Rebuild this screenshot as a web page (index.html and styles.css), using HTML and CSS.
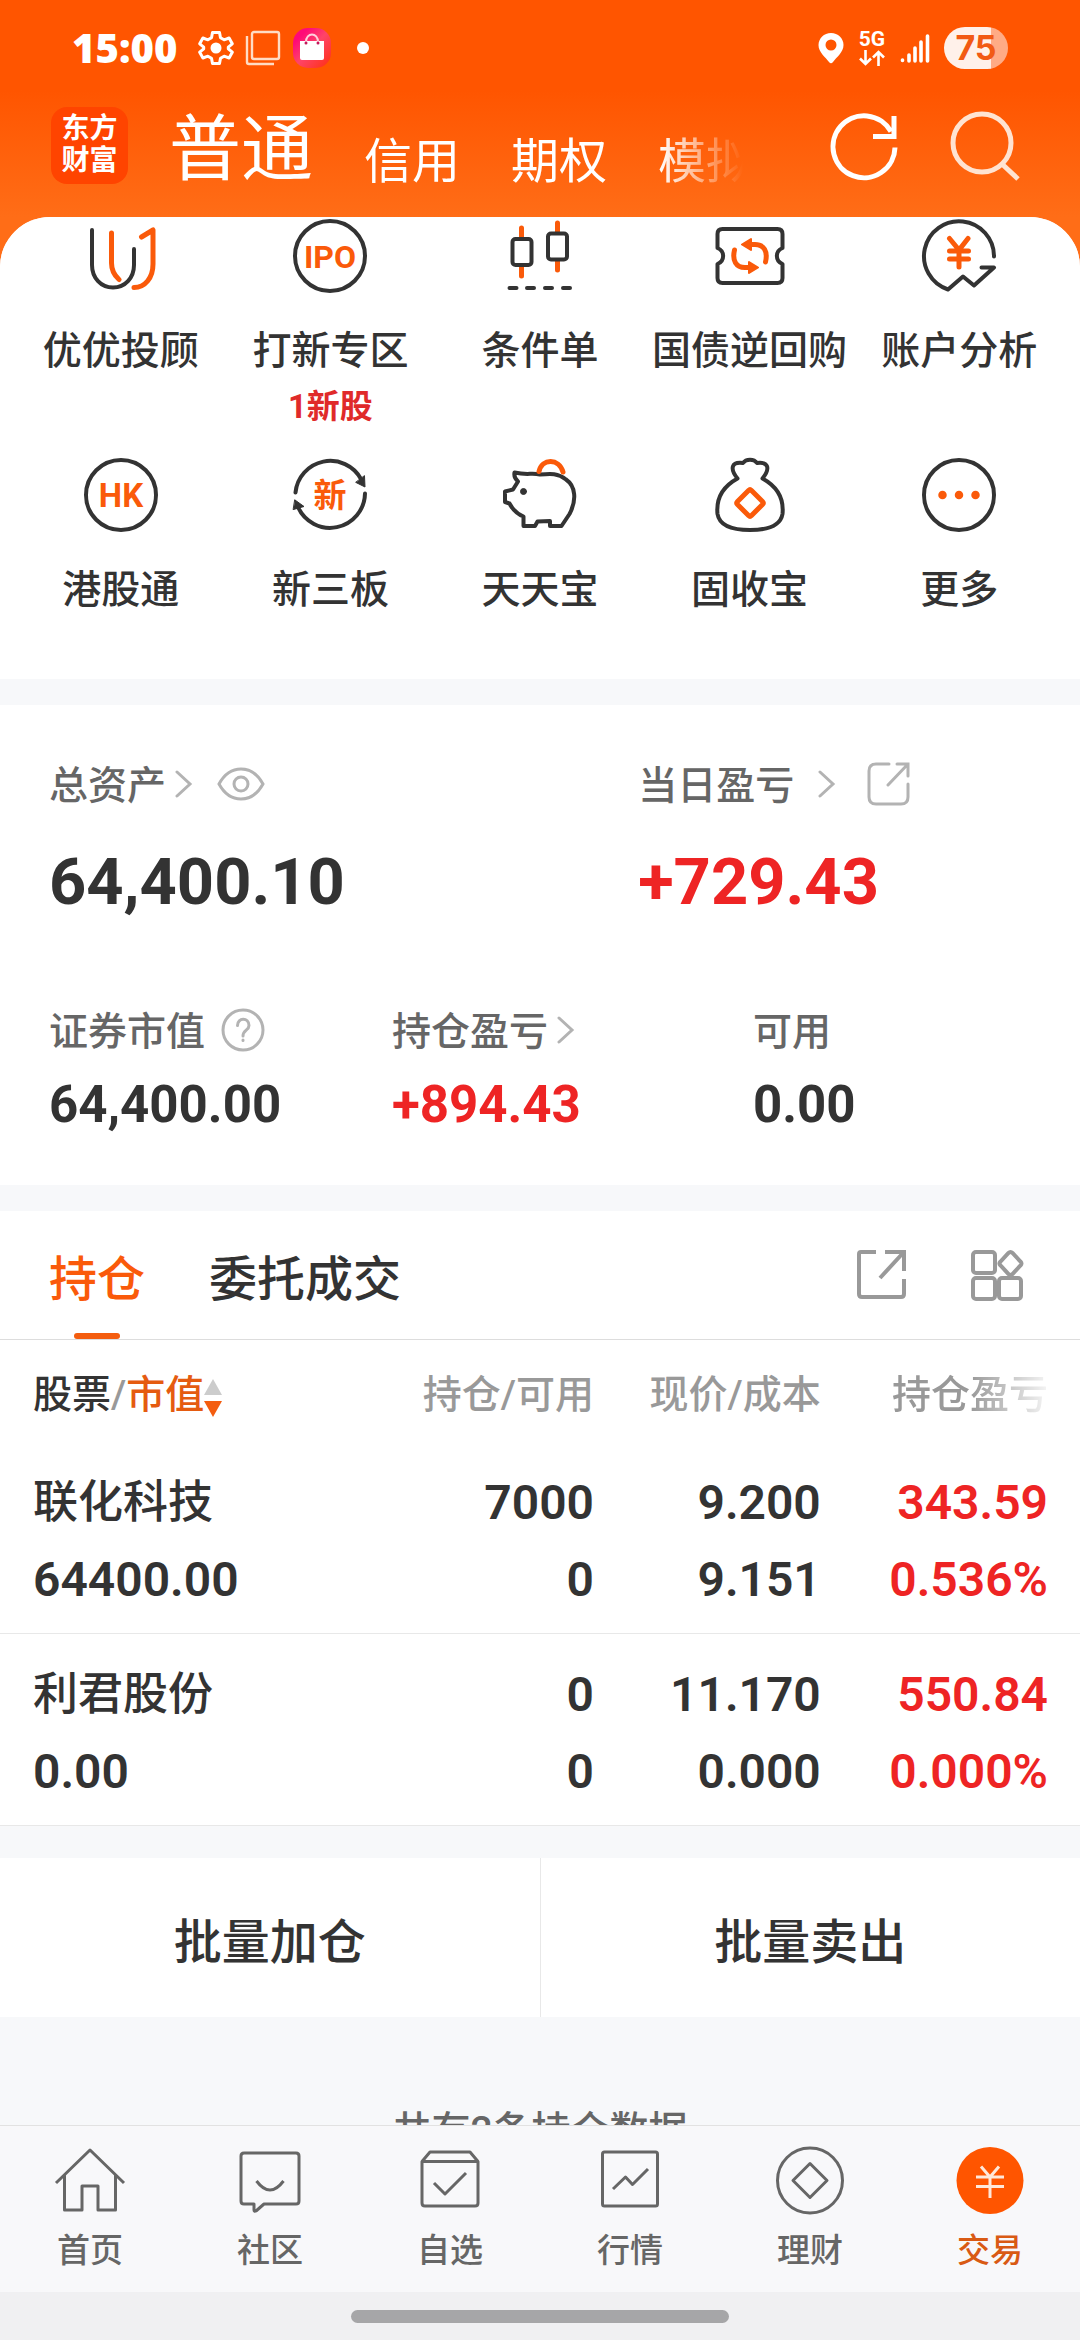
FILE: index.html
```html
<!DOCTYPE html>
<html lang="zh-CN">
<head>
    <meta charset="UTF-8">
    <meta name="viewport" content="width=device-width, initial-scale=1.0">
    <title>东方财富 - 交易</title>
    <link rel="stylesheet" href="styles.css">
</head>
<body>
<div class="app">
    <!-- Status bar -->
    <div class="status">
        <span class="clock">15:00</span>
        <svg class="st-gear" width="36" height="36" viewBox="0 0 36 36" fill="none" stroke="#fff" stroke-width="3" stroke-linejoin="round">
            <path d="M14.5 2.5h7l1 5.2 3.6 2.1 5-1.8 3.2 5.8-4 3.4v1.6l4 3.4-3.2 5.8-5-1.8-3.6 2.1-1 5.2h-7l-1-5.2-3.6-2.1-5 1.8-3.2-5.8 4-3.4v-1.6l-4-3.4 3.2-5.8 5 1.8 3.6-2.1z"/>
            <circle cx="18" cy="18" r="5.5" fill="#fff" stroke="none"/>
        </svg>
        <svg width="36" height="36" viewBox="0 0 36 36" fill="none" stroke="#ffdcc4" stroke-width="2.4">
            <rect x="7" y="2" width="27" height="27" rx="2"/>
            <path d="M2 6v26q0 2 2 2h25"/>
        </svg>
        <svg width="40" height="40" viewBox="0 0 40 40">
            <defs>
                <linearGradient id="bag" x1="0" y1="0" x2="1" y2="1">
                    <stop offset="0.2" stop-color="#ff0a78"/>
                    <stop offset="0.5" stop-color="#ff4468"/>
                    <stop offset="0.9" stop-color="#ff3320"/>
                </linearGradient>
            </defs>
            <rect x="1" y="0" width="38" height="40" rx="15" fill="url(#bag)"/>
            <path d="M8 13h24v17q0 2-2 2H10q-2 0-2-2z" fill="#fff"/>
            <path d="M14 14c0-10 12-10 12 0" fill="none" stroke="#ffd0dc" stroke-width="2"/>
            <circle cx="14" cy="15" r="1.5" fill="#c2185b"/><circle cx="26" cy="15" r="1.5" fill="#c2185b"/>
        </svg>
        <span class="dot"></span>
        <span class="spacer"></span>
        <svg width="26" height="32" viewBox="0 0 26 32"><path fill="#fff" fill-rule="evenodd" d="M13 1C6 1 .5 6.500.5 13c0 7.500 7 12 10.500 17q2 2.500 4 0c3.500-5 10.500-9.500 10.500-17C25.500 6.500 20 1 13 1zm0 6.500a5.500 5.500 0 1 1 0 11 5.500 5.500 0 0 1 0-11z"/></svg>
        <span class="net">
            <b>5G</b>
            <svg width="26" height="16" viewBox="0 0 26 16" fill="none" stroke="#fff" stroke-width="2.6"><path d="M6.500 0v14M1 8.500l5.500 5.500L12 8.500M19.500 16V2M14 7.500L19.500 2 25 7.500"/></svg>
        </span>
        <svg width="30" height="32" viewBox="0 0 30 32" stroke="#fff" stroke-width="3.6" stroke-linecap="round"><path d="M2.500 28v.5M9 23v6M15 16v13M21 10v19M27.500 4v25"/></svg>
        <span class="battery">75</span>
    </div>

    <!-- Title bar -->
    <header class="topbar">
        <a href="#" class="logo">东方<br>财富</a>
        <nav class="accounts">
            <a href="#" class="current">普通</a>
            <a href="#">信用</a>
            <a href="#">期权</a>
            <a href="#">模拟</a>
        </nav>
        <button class="icon-btn" aria-label="刷新">
            <svg width="72" height="72" viewBox="0 0 72 72" fill="none" stroke="#fff" stroke-width="5"><path d="M66 37.500A31 31 0 1 1 62 21.500M65 6v20.500H44"/></svg>
        </button>
        <button class="icon-btn" aria-label="搜索">
            <svg width="72" height="72" viewBox="0 0 72 72" fill="none" stroke="#ffe3d1" stroke-width="5"><circle cx="33" cy="33" r="29"/><path d="M53 54l16 15"/></svg>
        </button>
    </header>

    <main class="content">
        <!-- Shortcuts -->
        <section class="shortcuts">
            <a href="#">
                <svg class="ico" viewBox="0 0 76 76"><path d="M9 12V47c0 13 9 22.500 21 22.500S51 60 51 47V31"/><path class="o" d="M28.500 15V45c0 8 3 12.500 7.500 16.500M58.500 19L70 12V46c0 14-8 23.500-19 23.500"/></svg>
                <span>优优投顾</span>
            </a>
            <a href="#">
                <svg class="ico" viewBox="0 0 76 76"><circle cx="38" cy="38" r="35"/><text x="38" y="50" font-size="32">IPO</text></svg>
                <span>打新专区</span>
                <em>1新股</em>
            </a>
            <a href="#">
                <svg class="ico" viewBox="0 0 76 76"><path class="o" d="M19.500 10v9M19.500 49v9M55.500 5v9M55.500 43v9"/><rect x="10.500" y="21" width="19" height="26" rx="3"/><rect x="46" y="15.500" width="19" height="26" rx="3"/><path d="M7.500 70h7M25 70h7M43 70h7M61 70h7"/></svg>
                <span>条件单</span>
            </a>
            <a href="#">
                <svg class="ico" viewBox="0 0 76 76"><path d="M10.500 11h55q5 0 5 5v14c-7.500 3-7.500 13 0 16v14q0 5-5 5h-55q-5 0-5-5V46c7.500-3 7.500-13 0-16V16q0-5 5-5z"/><g class="o"><path d="M38 26.500h5c9 0 13 7 10.500 17.500M38 49.500h-5c-9 0-13-7-10.500-17.500"/><path class="fill" d="M30 26.500l9-5.500v11zM46 49.500L37 44v11z"/></g></svg>
                <span>国债逆回购</span>
            </a>
            <a href="#">
                <svg class="ico" viewBox="0 0 76 76"><path d="M73 38.500A35 35 0 1 0 27 71.500L42 58.500 53 67.500 73 49.500H60.500"/><path class="o" d="M28.500 20.500L38 32l9-11.500M38 32v17M28.500 33H47.500M28.500 41H47.500"/></svg>
                <span>账户分析</span>
            </a>
            <a href="#">
                <svg class="ico" viewBox="0 0 76 76"><circle cx="38" cy="38" r="35"/><text x="38" y="50" font-size="33">HK</text></svg>
                <span>港股通</span>
            </a>
            <a href="#">
                <svg class="ico" viewBox="0 0 76 76"><path d="M3.500 35.500A35 35 0 0 1 69 22M73 36.500A35 35 0 0 1 6 50"/><path class="dark" d="M72.500 19l.5 11-9-4.500zM3 43l9 6.500-10.500 3z"/><text x="38" y="50" font-size="33">新</text></svg>
                <span>新三板</span>
            </a>
            <a href="#">
                <svg class="ico" viewBox="0 0 76 76"><path d="M38 17.500C29 15.500 26 18.500 12.500 15.500q-1 5 3.500 9L11 32.500 3 34.500V45l4.500 1.500q5 9.500 14 13v9.500H33l2.500-4.500 12.500-.5V69H59.500l8-12C75 43 73.500 29 64 22.500 56 16 49 16.500 38 17.500z"/><path class="o" d="M37 14.500C40 1 57 1 61 15"/><circle class="dark" cx="21.500" cy="34.500" r="3"/></svg>
                <span>天天宝</span>
            </a>
            <a href="#">
                <svg class="ico" viewBox="0 0 76 76"><path d="M25.500 21.500C10 30 4 42 5.500 57 7.500 69 20 73 38 73s30.500-4 32.500-16C72 42 66 30 50.500 21.500c8-10 6-17-5.500-15.500-3-4.500-11-4.500-14 0-11.500-1.500-13.500 5.500-5.500 15.500"/><path class="o" d="M36.500 33.500q1.500-1.500 3 0l11 11q1.500 1.500 0 3l-11 11q-1.500 1.500-3 0l-11-11q-1.500-1.500 0-3z"/></svg>
                <span>固收宝</span>
            </a>
            <a href="#">
                <svg class="ico" viewBox="0 0 76 76"><circle cx="38" cy="38" r="35"/><g class="o"><path d="M21.500 38h0M38 38h0M54.500 38h0" stroke-width="8.500"/></g></svg>
                <span>更多</span>
            </a>
        </section>

        <!-- Assets -->
        <section class="assets">
            <div class="assets-main">
                <div>
                    <h2><a href="#">总资产</a>
                        <svg class="chev" viewBox="0 0 18 30"><path d="M2 3l13 12L2 27"/></svg>
                        <button class="eye" aria-label="隐藏金额"><svg width="48" height="36" viewBox="0 0 48 36"><path d="M2 18C13-2 35-2 46 18 35 38 13 38 2 18z"/><circle cx="24" cy="18" r="7"/></svg></button>
                    </h2>
                    <strong>64,400.10</strong>
                </div>
                <div>
                    <h2 class="daily"><a href="#">当日盈亏</a>
                        <svg class="chev" viewBox="0 0 18 30"><path d="M2 3l13 12L2 27"/></svg>
                        <button aria-label="分享"><svg width="44" height="44" viewBox="0 0 44 44"><path d="M22 2H9Q2 2 2 9V35q0 7 7 7H34q7 0 7-7V22M30 2H41V14M41 2L21 23"/></svg></button>
                    </h2>
                    <strong class="up">+729.43</strong>
                </div>
            </div>
            <div class="assets-sub">
                <div>
                    <h3>证券市值
                        <button class="help" aria-label="说明"><svg width="44" height="44" viewBox="0 0 44 44"><circle cx="22" cy="22" r="20"/><path d="M16.500 17.500c0-8.500 11.500-8 11.500 0 0 5-6 4.500-6 10.500M22 32v.5"/></svg></button>
                    </h3>
                    <strong>64,400.00</strong>
                </div>
                <div>
                    <h3><a href="#">持仓盈亏</a>
                        <svg class="chev" viewBox="0 0 18 30"><path d="M2 3l13 12L2 27"/></svg>
                    </h3>
                    <strong class="up">+894.43</strong>
                </div>
                <div>
                    <h3>可用</h3>
                    <strong>0.00</strong>
                </div>
            </div>
        </section>

        <!-- Positions -->
        <section class="positions">
            <div class="tabs">
                <button class="tab active">持仓</button>
                <button class="tab">委托成交</button>
                <span class="spacer"></span>
                <button class="tool" aria-label="分享"><svg width="54" height="54" viewBox="0 0 54 54"><path d="M23 4H8Q6 4 6 6V46q0 3 3 3H48q3 0 3-3V31M32 4H51V23M50 5L27 30"/></svg></button>
                <button class="tool" aria-label="布局"><svg width="54" height="54" viewBox="0 0 54 54"><rect x="2" y="4" width="22" height="21" rx="3"/><rect x="2" y="30" width="22" height="21" rx="3"/><rect x="28" y="30" width="22" height="21" rx="3"/><path d="M37.500 5q2-2 4 0l8 8.500q2 2 0 4l-8 8.500q-2 2-4 0l-8-8.500q-2-2 0-4z"/></svg></button>
            </div>
            <table>
                <thead>
                    <tr>
                        <th><b>股票</b>/<i>市值</i><svg class="sort" width="18" height="38" viewBox="0 0 18 38"><path fill="#ccc" d="M9 0l9 16H0z"/><path fill="#f45d0f" d="M9 38l9-16H0z"/></svg></th>
                        <th>持仓/可用</th>
                        <th>现价/成本</th>
                        <th><span class="fade">持仓盈亏</span></th>
                    </tr>
                </thead>
                <tbody>
                    <tr>
                        <td><span class="name">联化科技</span><span>64400.00</span></td>
                        <td><span>7000</span><span>0</span></td>
                        <td><span>9.200</span><span>9.151</span></td>
                        <td class="up"><span>343.59</span><span>0.536%</span></td>
                    </tr>
                    <tr>
                        <td><span class="name">利君股份</span><span>0.00</span></td>
                        <td><span>0</span><span>0</span></td>
                        <td><span>11.170</span><span>0.000</span></td>
                        <td class="up"><span>550.84</span><span>0.000%</span></td>
                    </tr>
                </tbody>
            </table>
        </section>

        <div class="batch">
            <button>批量加仓</button>
            <button>批量卖出</button>
        </div>
        <p class="total">共有2条持仓数据</p>
    </main>

    <!-- Bottom nav -->
    <nav class="bottom">
        <a href="#"><svg viewBox="0 0 72 72"><path d="M2 38L36 5l34 33M10.500 30V65H28V41H44V65H61.500V30"/></svg>首页</a>
        <a href="#"><svg viewBox="0 0 72 72"><path d="M10 8H62q3 0 3 3V56q0 3-3 3H30l-8 7q-2 1-2-1V59H10q-3 0-3-3V11q0-3 3-3zM22.500 36q13.500 18 27 0"/></svg>社区</a>
        <a href="#"><svg viewBox="0 0 72 72"><path d="M8 16.500H64V58q0 3-3 3H11q-3 0-3-3zl8-9.500H56l8 9.500M20 38L31 49 52 28"/></svg>自选</a>
        <a href="#"><svg viewBox="0 0 72 72"><rect x="8.500" y="7" width="55" height="54" rx="2"/><path d="M19 44L31.500 32 38.500 39.500 54 24"/></svg>行情</a>
        <a href="#"><svg viewBox="0 0 72 72"><circle cx="36" cy="35.500" r="32.500"/><path d="M36 18.500L53 35.500 36 52.500 19 35.500z"/></svg>理财</a>
        <a href="#" class="active"><svg viewBox="0 0 72 72"><circle cx="36" cy="35.500" r="33.500"/><path d="M27 21.500L36 32l9-10.500M36 32V53M22 32H50M22 41.500H50"/></svg>交易</a>
    </nav>
    <div class="homebar"><span></span></div>
</div>
</body>
</html>
```
FILE: styles.css
```css
* {
    box-sizing: border-box;
}
body {
    margin: 0;
    font-family: Roboto, "Noto Sans CJK SC", sans-serif;
    font-weight: 500;
    color: #333;
    background: #f7f8fa;
}
a {
    color: inherit;
    text-decoration: none;
}
button {
    padding: 0;
    border: none;
    background: none;
    color: inherit;
    font: inherit;
    cursor: pointer;
}
svg {
    display: block;
    flex: none;
}
h2, h3, p {
    margin: 0;
}
.spacer {
    flex: 1;
}
.app {
    display: flex;
    flex-direction: column;
    height: 100vh;
    background: linear-gradient(#ff5500 90px, #ff6d17 217px);
}

/* status bar */
.status {
    display: flex;
    align-items: center;
    height: 96px;
    padding: 0 72px;
    color: #fff;
}
.clock {
    font: 800 40px/48px "Open Sans", sans-serif;
}
.st-gear {
    margin-left: 21px;
}
.status svg + svg {
    margin-left: 11px;
}
.dot {
    width: 12px;
    height: 12px;
    margin-left: 25px;
    border-radius: 50%;
    background: #fff;
}
.net {
    display: flex;
    flex-direction: column;
    align-items: center;
    gap: 2px;
    margin: 0 15px;
}
.net b {
    font-size: 21px;
    line-height: 18px;
}
.battery {
    width: 64px;
    height: 42px;
    margin-left: 14px;
    border-radius: 21px;
    background: linear-gradient(90deg, #fff1ea 74%, #ffab85 74%);
    color: #f25a14;
    font: 700 34px/42px Inter, sans-serif;
    text-align: center;
}

/* title bar */
.topbar {
    display: flex;
    align-items: center;
    height: 121px;
    padding: 0 59px 22px 51px;
    color: #fff;
}
.logo {
    width: 77px;
    height: 77px;
    padding-top: 6px;
    border-radius: 16px;
    background: #ff4400;
    font-size: 28px;
    font-weight: 700;
    line-height: 32px;
    text-align: center;
}
.accounts {
    display: flex;
    flex: 1;
    align-items: flex-end;
    gap: 51px;
    margin: 0 86px 0 41px;
    padding-top: 8px;
    overflow: hidden;
    white-space: nowrap;
    font-size: 48px;
    font-weight: 400;
    line-height: 66px;
    -webkit-mask-image: linear-gradient(90deg, #000 calc(100% - 84px), transparent);
    mask-image: linear-gradient(90deg, #000 calc(100% - 84px), transparent);
}
.accounts .current {
    font-size: 72px;
    line-height: 90px;
}
.icon-btn + .icon-btn {
    margin-left: 48px;
}

.content {
    flex: 1;
    min-height: 0;
    overflow: hidden;
    border-radius: 50px 50px 0 0;
    background: #f7f8fa;
}

/* shortcuts */
.shortcuts {
    display: grid;
    grid-template-columns: repeat(5, 1fr);
    grid-auto-rows: 239px;
    padding: 1px 16px 0;
    height: 462px;
    background: #fff;
    text-align: center;
}
.shortcuts a {
    display: flex;
    flex-direction: column;
    align-items: center;
    white-space: nowrap;
    font-size: 39px;
    line-height: 56px;
}
.shortcuts span {
    margin-top: 29px;
}
.shortcuts em {
    font-size: 33px;
    font-style: normal;
    font-weight: 700;
    color: #e02a2a;
}
.ico {
    width: 76px;
    height: 76px;
    fill: none;
    stroke: #333;
    stroke-width: 4;
    stroke-linecap: round;
    stroke-linejoin: round;
}
.ico .o {
    stroke: #fa5a0a;
    stroke-width: 5;
}
.ico .fill {
    fill: #fa5a0a;
    stroke-width: 2;
}
.ico .dark {
    fill: #333;
    stroke-width: 1;
}
.ico text {
    fill: #fa5a0a;
    stroke: none;
    font-weight: 700;
    text-anchor: middle;
}

/* assets */
.assets {
    margin: 26px 0;
    padding: 57px 49px 50px;
    background: #fff;
}
.assets h2, .assets h3 {
    display: flex;
    align-items: center;
    height: 48px;
    font-size: 39px;
    font-weight: 500;
    line-height: 48px;
    color: #666;
}
.assets svg {
    margin-bottom: 4px;
    fill: none;
    stroke: #b3b3b3;
    stroke-width: 3;
    stroke-linecap: round;
}
.assets strong {
    display: block;
    font-weight: 700;
}
.chev {
    width: 18px;
    height: 30px;
    margin-left: 9px;
}
.eye {
    margin-left: 24px;
}
.daily .chev {
    margin-right: 31px;
    margin-left: 24px;
}
.help {
    margin-left: 16px;
}
.assets-main {
    display: grid;
    grid-template-columns: 3fr 2fr;
}
.assets-main strong {
    margin-top: 34px;
    font-size: 65px;
    line-height: 76px;
}
.assets-sub {
    display: grid;
    grid-template-columns: 343fr 361fr 278fr;
    margin-top: 88px;
}
.assets-sub strong {
    margin-top: 19px;
    font-size: 51px;
    line-height: 60px;
}
.up, .assets .up {
    color: #ee2424;
}

/* positions */
.positions {
    background: #fff;
}
.tabs {
    display: flex;
    align-items: center;
    gap: 64px;
    height: 129px;
    padding: 0 55px 0 49px;
    border-bottom: 1px solid #ddd;
}
.tab {
    position: relative;
    height: 128px;
    font-size: 48px;
}
.tab.active {
    color: #fa5a0a;
}
.tab.active::after {
    content: "";
    position: absolute;
    left: 50%;
    bottom: 0;
    width: 46px;
    height: 6px;
    margin-left: -23px;
    border-radius: 3px;
    background: #f45d0f;
}
.tool svg {
    fill: none;
    stroke: #999;
    stroke-width: 4;
}
table {
    width: 100%;
    table-layout: fixed;
    border-collapse: collapse;
}
th {
    width: 21%;
    height: 102px;
    padding: 0;
    font-size: 39px;
    font-weight: 500;
    text-align: right;
    white-space: nowrap;
    color: #999;
}
th b {
    font-weight: 500;
    color: #333;
}
th i {
    font-style: normal;
    color: #e55b10;
}
th:first-child {
    width: 34%;
}
th:last-child {
    width: 24%;
}
th:first-child, td:first-child {
    padding-left: 33px;
    text-align: left;
}
th:last-child, td:last-child {
    padding-right: 32px;
}
.sort {
    display: inline-block;
    vertical-align: middle;
}
.fade {
    -webkit-mask-image: linear-gradient(90deg, #000 50%, rgba(0, 0, 0, 0.1));
    mask-image: linear-gradient(90deg, #000 50%, rgba(0, 0, 0, 0.1));
}
td {
    padding: 22px 0 15px;
    border-bottom: 1px solid #e8e8e8;
    font-size: 48px;
    font-weight: 600;
    line-height: 77px;
    text-align: right;
}
td span {
    display: block;
}
td .name {
    font-size: 45px;
    font-weight: 500;
}

.batch {
    display: flex;
    margin-top: 32px;
    background: #fff;
}
.batch button {
    flex: 1;
    height: 159px;
    font-size: 48px;
}
.batch button + button {
    border-left: 1px solid #e8e8e8;
}
.total {
    margin-top: 86px;
    font-size: 39px;
    line-height: 56px;
    text-align: center;
    color: #666;
}

/* bottom nav */
.bottom {
    display: flex;
    height: 167px;
    padding-top: 19px;
    border-top: 1px solid #e2e2e2;
    background: #f8f8fa;
}
.bottom a {
    display: flex;
    flex: 1;
    flex-direction: column;
    align-items: center;
    gap: 14px;
    font-size: 33px;
    line-height: 40px;
    color: #666;
}
.bottom svg {
    width: 72px;
    height: 72px;
    fill: none;
    stroke: #666;
    stroke-width: 3;
    stroke-linejoin: round;
}
.bottom .active {
    color: #d95a14;
}
.bottom .active svg {
    stroke: #ffe8da;
}
.bottom .active circle {
    fill: #ff5500;
    stroke: none;
}
.homebar {
    height: 48px;
    padding-top: 18px;
    background: #f0f0f2;
}
.homebar span {
    display: block;
    width: 35%;
    height: 13px;
    margin: 0 auto;
    border-radius: 7px;
    background: #a6a6a8;
}
```
